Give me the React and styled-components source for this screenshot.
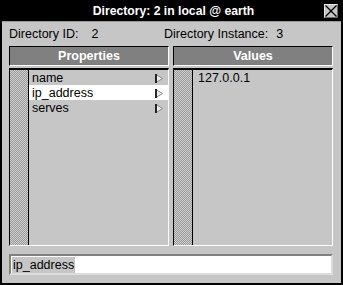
import React from 'react'
import styled, { createGlobalStyle } from 'styled-components'

const Global = createGlobalStyle`
  html, body { margin:0; padding:0; background:#000; }
  body { font-family:"Liberation Sans", Arial, sans-serif; }
`

const props = [
  { name: 'name' },
  { name: 'ip_address', selected: true },
  { name: 'serves' },
]

const Arrow = () => (
  <svg width="8" height="9" viewBox="0 0 8 9">
    <polygon points="1,0.5 7.5,4.5 1,8.5" fill="#ececec" stroke="#8a8a8a" strokeWidth="1" />
    <line x1="1" y1="0" x2="1" y2="9" stroke="#000" strokeWidth="1.6" />
  </svg>
)

const CloseIcon = () => (
  <svg width="14" height="14" viewBox="0 0 14 14">
    <line x1="1.5" y1="1.5" x2="12.5" y2="12.5" stroke="#000" strokeWidth="1.2" />
    <line x1="12.5" y1="1.5" x2="1.5" y2="12.5" stroke="#000" strokeWidth="1.2" />
  </svg>
)

const App = () => {
  return (
    <>
      <Global />
      <Window>
        <TitleBar>
          <Title>Directory: 2 in local @ earth</Title>
          <CloseButton><CloseIcon /></CloseButton>
        </TitleBar>

        <Body>
          <InfoRow>
            <InfoCell>
              <Label>Directory ID:</Label>
              <Value $gap={13}>2</Value>
            </InfoCell>
            <InfoCell>
              <Label>Directory Instance:</Label>
              <Value $gap={8}>3</Value>
            </InfoCell>
          </InfoRow>

          <Columns>
            <Header>Properties</Header>
            <Header>Values</Header>
          </Columns>

          <Lists>
            <ListBox>
              <Stripe />
              <Items>
                {props.map((p) => (
                  <Item key={p.name} $selected={p.selected}>
                    <span>{p.name}</span>
                    <Arrow />
                  </Item>
                ))}
              </Items>
            </ListBox>
            <ListBox>
              <Stripe />
              <Items>
                <Item $pad={5}>127.0.0.1</Item>
              </Items>
            </ListBox>
          </Lists>

          <Input>
            <Selected>ip_address</Selected>
          </Input>
        </Body>
      </Window>
    </>
  )
}

export default App


const Window = styled.div`
    width:343px;
    height:285px;
    box-sizing:border-box;
    background:#000;
    padding:0 2px 2px 2px;
    display:flex;
    flex-direction:column;
`
const TitleBar = styled.div`
    height:21px;
    position:relative;
    display:flex;
    align-items:center;
    justify-content:center;
    background:#000;
    border-bottom:1px solid #9a9a9a;
`
const Title = styled.div`
    color:#fff;
    font-weight:bold;
    font-size:12.2px;
    margin-top:1px;
    margin-left:4px;
`
const CloseButton = styled.div`
    position:absolute;
    right:3px;
    top:4px;
    width:14px;
    height:14px;
    box-sizing:border-box;
    background:#c6c6c6;
    border:1px solid #e8e8e8;
    border-right-color:#6a6a6a;
    border-bottom-color:#6a6a6a;
    svg { position:absolute; left:-1px; top:-1px; }
`
const Body = styled.div`
    flex:1;
    background:#c6c6c6;
    padding:0 8px 8px 7px;
    display:flex;
    flex-direction:column;
`
const InfoRow = styled.div`
    height:24px;
    display:grid;
    grid-template-columns:155px 1fr;
    align-items:center;
    font-size:12.5px;
    color:#000;
`
const InfoCell = styled.div`
    display:flex;
    align-items:center;
`
const Label = styled.span``
const Value = styled.span`
    margin-left:${p => p.$gap}px;
`
const Columns = styled.div`
    display:grid;
    grid-template-columns:160px 160px;
    gap:4px;
    height:20px;
`
const Header = styled.div`
    box-sizing:border-box;
    background:#808080;
    border:1px solid #fff;
    border-top-color:#000;
    border-left-color:#000;
    color:#fff;
    font-weight:bold;
    font-size:12.5px;
    display:flex;
    align-items:center;
    justify-content:center;
`
const Lists = styled.div`
    display:grid;
    grid-template-columns:160px 160px;
    gap:4px;
    height:178px;
    margin-top:2px;
`
const ListBox = styled.div`
    box-sizing:border-box;
    border:1px solid #fff;
    border-top:2px solid #000;
    border-left:1px solid #000;
    display:flex;
`
const Stripe = styled.div`
    width:18px;
    border-right:1px solid #000;
    background-image:conic-gradient(#9a9a9a 25%, #cfcfcf 0 50%, #9a9a9a 0 75%, #cfcfcf 0);
    background-size:2px 2px;
`
const Items = styled.div`
    flex:1;
    display:flex;
    flex-direction:column;
`
const Item = styled.div`
    height:15px;
    display:flex;
    align-items:center;
    justify-content:space-between;
    padding:0 5px 0 ${p => p.$pad || 3}px;
    font-size:12.5px;
    color:#000;
    background:${p => (p.$selected ? '#fff' : 'transparent')};
    svg { margin-top:1px; }
`
const Input = styled.div`
    margin-top:8px;
    height:21px;
    box-sizing:border-box;
    background:#fff;
    border:2px solid #dcdcdc;
    border-top-color:#808080;
    border-left-color:#808080;
    display:flex;
    align-items:center;
    padding-left:1px;
    font-size:12.5px;
`
const Selected = styled.span`
    background:#c6c6c6;
    padding:1px;
`
